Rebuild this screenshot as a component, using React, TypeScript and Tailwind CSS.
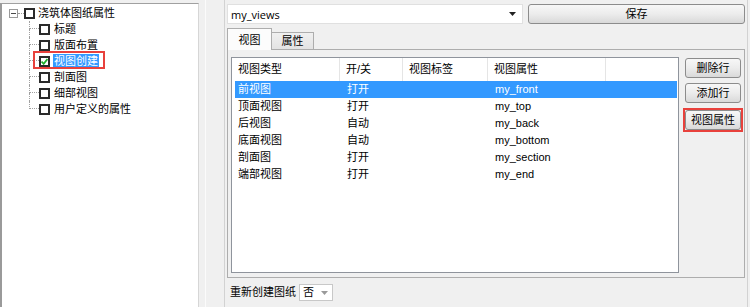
import React from "react";

const FONT = { fontFamily: '"Liberation Sans", "Noto Sans CJK SC", sans-serif' };

function Box({ checked }: { checked?: boolean }) {
  return (
    <div className="w-[11px] h-[11px] border-2 border-[#2a2a2a] bg-white flex items-center justify-center shrink-0">
      {checked && (
        <svg width="7" height="7" viewBox="0 0 7 7">
          <path d="M0.5 3.5 L2.7 5.8 L6.5 1" stroke="#1fae2a" strokeWidth="1.8" fill="none" />
        </svg>
      )}
    </div>
  );
}

const children = ["标题", "版面布置", "视图创建", "剖面图", "细部视图", "用户定义的属性"];

function Btn({ label, wide }: { label: string; wide?: boolean }) {
  return (
    <div
      className={`h-[20px] ${wide ? "" : "w-[56px]"} rounded-[3px] border border-[#8c8c8c] bg-gradient-to-b from-[#f7f7f7] via-[#ececec] to-[#d9d9d9] flex items-center justify-center text-[11px] text-black`}
    >
      {label}
    </div>
  );
}

const rows = [
  ["前视图", "打开", "", "my_front"],
  ["顶面视图", "打开", "", "my_top"],
  ["后视图", "自动", "", "my_back"],
  ["底面视图", "自动", "", "my_bottom"],
  ["剖面图", "打开", "", "my_section"],
  ["端部视图", "打开", "", "my_end"],
];

const cols = [108, 63, 85, 118];

export default function App() {
  return (
    <div className="w-[750px] h-[307px] bg-[#f0f0f0] flex text-[11px] text-black leading-none" style={FONT}>
      {/* Left tree panel */}
      <div className="w-[199px] mt-[3px] bg-white border-l-2 border-t border-r border-l-[#9a9a9a] border-t-[#a0a0a0] border-r-[#d6d6d6] flex flex-col pt-[1px]">
        <div className="h-[16px] flex items-center pl-[7px]">
          <div className="w-[9px] h-[9px] border border-[#9a9a9a] flex items-center justify-center shrink-0">
            <div className="w-[5px] h-px bg-[#4a4a4a]" />
          </div>
          <div className="w-[6px] border-t border-dotted border-[#9a9a9a]" />
          <Box />
          <span className="ml-[3px]">浇筑体图纸属性</span>
        </div>
        {children.map((c, i) => {
          const last = i === children.length - 1;
          const sel = c === "视图创建";
          return (
            <div key={c} className="h-[16px] flex items-stretch pl-[27px]">
              <div className="w-[10px] flex flex-col shrink-0">
                <div className="h-1/2 border-l border-b border-dotted border-[#a0a0a0]" />
                <div className={`h-1/2 ${last ? "" : "border-l border-dotted border-[#a0a0a0]"}`} />
              </div>
              <div className="relative flex items-center">
                <Box checked={sel} />
                {sel ? (
                  <span className="ml-[3px] px-px h-[14px] flex items-center bg-[#3399ff] text-white">{c}</span>
                ) : (
                  <span className="ml-[4px]">{c}</span>
                )}
                {sel && <div className="absolute -left-[6px] -right-[6px] -top-[2px] bottom-0 border-2 border-[#e8413c]" />}
              </div>
            </div>
          );
        })}
      </div>

      {/* splitter */}
      <div className="w-[6px]" />
      <div className="w-px bg-[#fbfbfb]" />
      <div className="w-[18px]" />

      {/* Right area */}
      <div className="w-[524px] border-l border-r border-[#d2d2d2] pl-[2px] flex flex-col">
        <div className="mt-[4px] h-[20px] flex gap-[5px]">
          <div className="w-[296px] bg-white border border-[#e0e0e0] flex items-center pl-[3px] pr-[6px]">
            <span className="flex-1 text-[11px]" style={{ fontFamily: '"Open Sans", "Noto Sans CJK SC", sans-serif' }}>my_views</span>
            <svg width="7" height="4" viewBox="0 0 7 4">
              <path d="M0 0 H7 L3.5 4 Z" fill="#222" />
            </svg>
          </div>
          <div className="w-[217px] rounded-[3px] border border-[#8c8c8c] bg-gradient-to-b from-[#f7f7f7] via-[#ececec] to-[#d9d9d9] flex items-center justify-center">
            保存
          </div>
        </div>

        {/* tabs */}
        <div className="mt-[4px] h-[22px] flex items-end relative z-10">
          <div className="w-[45px] h-[22px] bg-[#fcfcfc] border border-b-0 border-[#adadad] flex items-center justify-center pt-[2px]">视图</div>
          <div className="w-[42px] h-[18px] bg-gradient-to-b from-[#f0f0f0] to-[#e3e3e3] border border-l-0 border-[#adadad] flex items-center justify-center">属性</div>
        </div>
        <div className="-mt-px w-[518px] h-[229px] border border-[#adadad] bg-[#f0f0f0] flex pl-[3px] pt-[7px] gap-[4px]">
          {/* list */}
          <div className="w-[448px] h-[216px] bg-white border border-[#8f949c] flex flex-col">
            <div className="h-[23px] flex items-center">
              {["视图类型", "开/关", "视图标签", "视图属性"].map((h, i) => (
                <div key={h} className="h-full flex items-center pl-[6px] border-r border-[#e5e5e5]" style={{ width: cols[i] }}>
                  {h}
                </div>
              ))}
            </div>
            {rows.map((r, ri) => (
              <div key={ri} className={`h-[17px] ml-[3px] mr-[1px] flex items-center ${ri === 0 ? "bg-[#3399ff] text-white" : ""}`}>
                {r.map((c, ci) => (
                  <div key={ci} style={{ width: ci === 0 ? cols[0] - 3 : cols[ci], paddingLeft: ci === 0 ? 3 : 7 }}>
                    {c}
                  </div>
                ))}
              </div>
            ))}
          </div>
          {/* buttons */}
          <div className="w-[60px] flex flex-col gap-[5px] pt-[1px]">
            <div className="px-[2px]"><Btn label="删除行" /></div>
            <div className="px-[2px]"><Btn label="添加行" /></div>
            <div className="border-2 border-[#e8413c]"><Btn label="视图属性" wide /></div>
          </div>
        </div>

        {/* bottom row */}
        <div className="mt-[6px] h-[17px] flex items-center pl-[3px] gap-[3px]">
          <span>重新创建图纸</span>
          <div className="w-[34px] h-[17px] bg-white border border-[#c8c8c8] flex items-center pl-[3px] pr-[4px]">
            <span className="flex-1">否</span>
            <svg width="7" height="4" viewBox="0 0 7 4">
              <path d="M0 0 H7 L3.5 4 Z" fill="#9a9a9a" />
            </svg>
          </div>
        </div>
      </div>
    </div>
  );
}
